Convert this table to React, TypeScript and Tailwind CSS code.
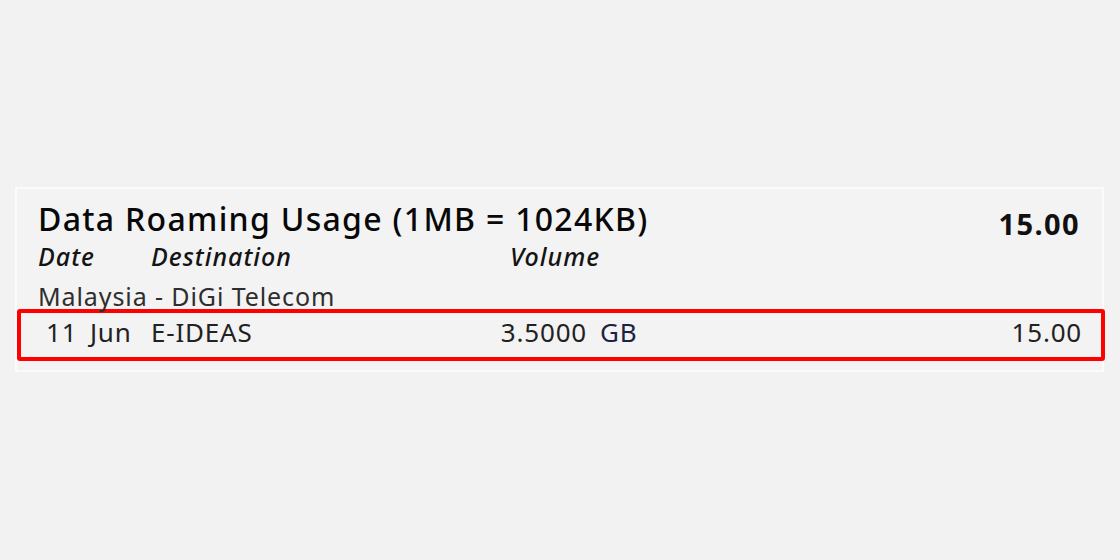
import React from 'react';

const font = { fontFamily: '"Noto Sans", "Open Sans", sans-serif' };

const App: React.FC = () => {
  return (
    <div className="w-[1120px] h-[560px] bg-[#f2f2f2] pt-[187px] pl-[15px]" style={font}>
      <div className="w-[1089px] h-[185px] bg-[#f3f3f3] border-2 border-[#fbfbfb] pt-[12px]">
        <div className="flex items-start justify-between pl-[21px] pr-[22px]">
          <h1 className="text-[32px] leading-[36px] font-medium text-[#080808] tracking-[1.3px]">
            Data Roaming Usage (1MB = 1024KB)
          </h1>
          <span className="text-[29px] leading-[36px] font-bold text-[#111] tracking-[1.4px] mt-[5px]">15.00</span>
        </div>

        <div className="grid grid-cols-[113px_359px_1fr] pl-[21px] text-[25px] leading-[28px] italic font-medium text-[#141414] tracking-[1px]">
          <span>Date</span>
          <span>Destination</span>
          <span>Volume</span>
        </div>

        <div className="pl-[21px] mt-[12px] text-[25px] leading-[28px] text-[#2e2e2e] tracking-[0.9px]">
          Malaysia - DiGi Telecom
        </div>

        <div className="mr-[-3px] mt-[-1px] h-[52px] border-4 border-[#ff0000] rounded-[3px] flex items-start pt-[5px] pl-[25px] pr-[19px] text-[26px] leading-[28px] text-[#222] tracking-[0.8px]">
          <span className="w-[105px] [word-spacing:5px]">11 Jun</span>
          <span className="w-[335px]">E-IDEAS</span>
          <span className="w-[101px] text-right">3.5000</span>
          <span className="ml-[13px] text-[#1c2340]">GB</span>
          <span className="flex-1 text-right">15.00</span>
        </div>
      </div>
    </div>
  );
};

export default App;
